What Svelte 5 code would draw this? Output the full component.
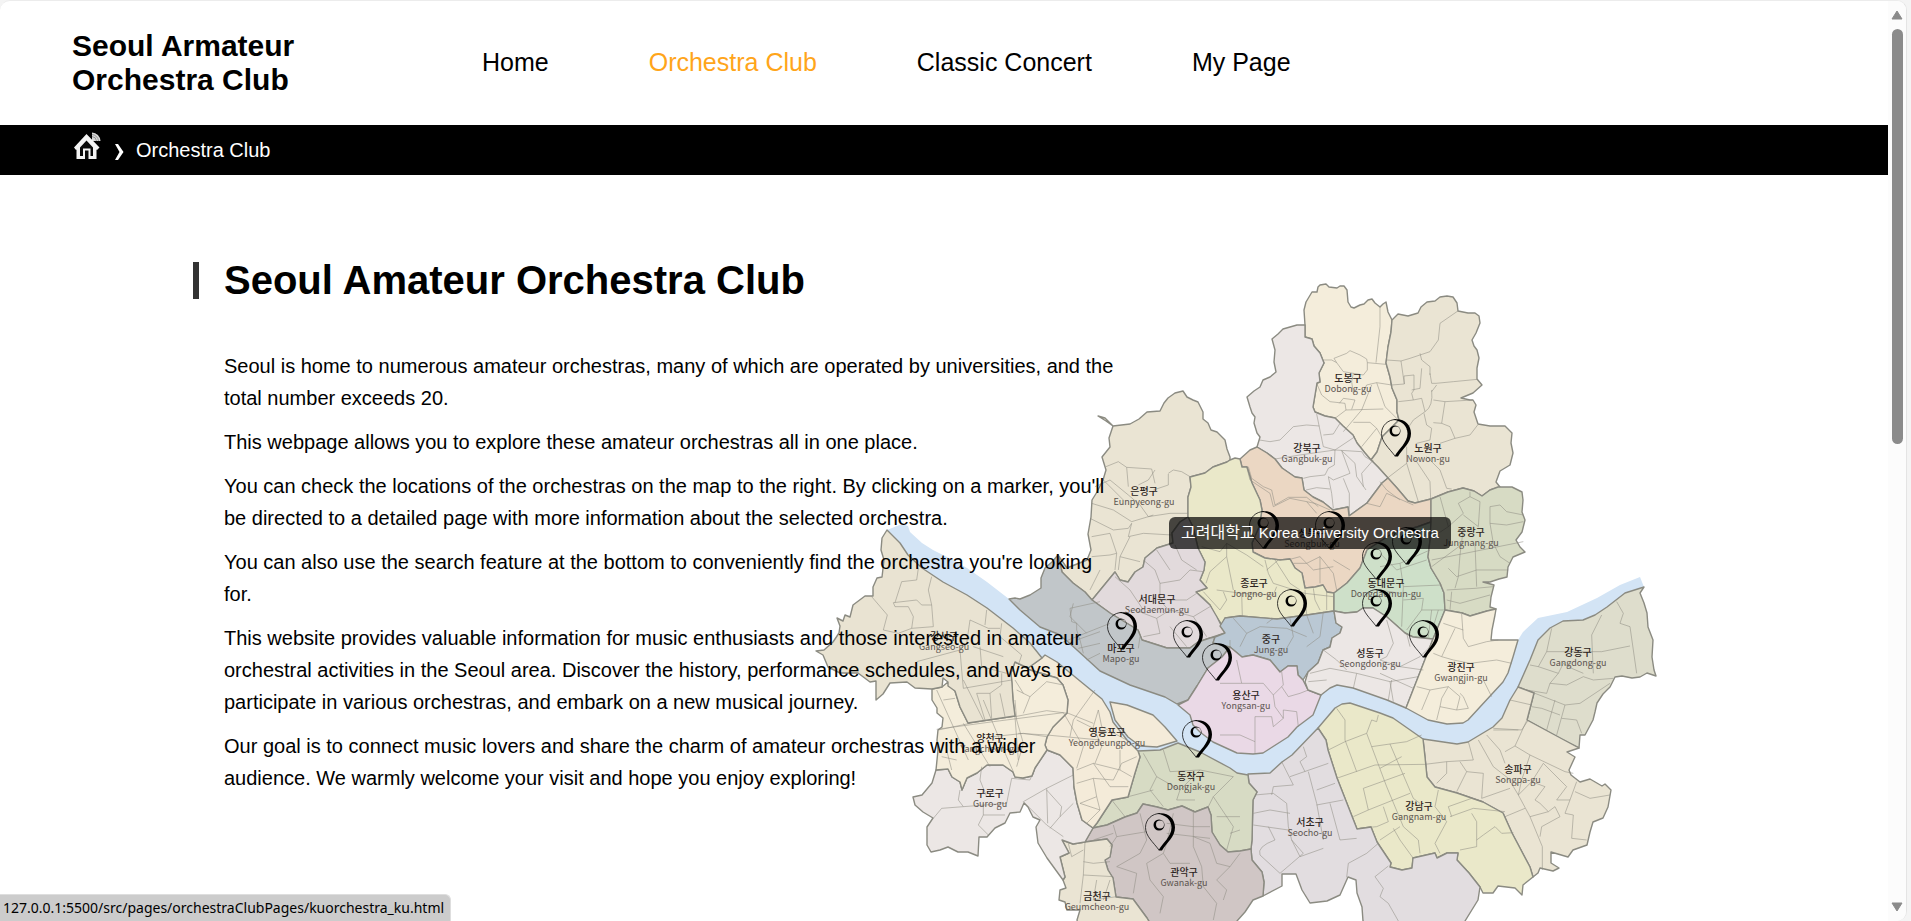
<script>
  const nav = [
    { label: 'Home', active: false },
    { label: 'Orchestra Club', active: true },
    { label: 'Classic Concert', active: false },
    { label: 'My Page', active: false }
  ];

  const paragraphs = [
    'Seoul is home to numerous amateur orchestras, many of which are operated by universities, and the total number exceeds 20.',
    'This webpage allows you to explore these amateur orchestras all in one place.',
    "You can check the locations of the orchestras on the map to the right. By clicking on a marker, you'll be directed to a detailed page with more information about the selected orchestra.",
    "You can also use the search feature at the bottom to conveniently find the orchestra you're looking for.",
    'This website provides valuable information for music enthusiasts and those interested in amateur orchestral activities in the Seoul area. Discover the history, performance schedules, and ways to participate in various orchestras, and embark on a new musical journey.',
    'Our goal is to connect music lovers and share the charm of amateur orchestras with a wider audience. We warmly welcome your visit and hope you enjoy exploring!'
  ];

  // Map units: the drawing starts at (800, 255).
  const originX = 800;
  const originY = 255;

  const river =
    '887,530 902,524 908,526 910,532 922,543 933,550 947,557 967,568 987,582 1009,599 1040,627 1067,638 1120,670 1177,690 1260,740 1321,690 1337,680 1406,700 1447,715 1500,670 1518,640 1523,632 1538,618 1567,612 1597,598 1620,585 1640,577 1644,587 1625,593 1607,607 1595,615 1583,620 1563,621 1550,628 1538,640 1530,660 1518,687 1510,705 1502,722 1493,732 1468,745 1457,748 1423,745 1393,722 1350,708 1335,712 1318,732 1292,759 1270,777 1248,778 1178,750 1138,756 1120,745 1095,705 1042,665 960,600 900,550';

  const districts = [
    { ko: '도봉구', en: 'Dobong-gu', x: 1348, y: 378, fill: '#f4eddb', points: '1305,325 1304,310 1306,302 1309,297 1312,292 1317,292 1318,287 1320,285 1326,284 1329,287 1337,288 1340,286 1344,286 1347,290 1348,302 1351,307 1354,308 1360,305 1364,304 1368,300 1372,299 1375,303 1380,307 1383,304 1386,302 1388,312 1392,320 1391,332 1388,347 1386,363 1390,377 1392,388 1397,400 1397,412 1399,420 1391,428 1382,437 1377,452 1371,460 1365,453 1357,443 1353,435 1343,426 1335,418 1325,416 1315,412 1313,407 1317,383 1320,382 1319,373 1324,363 1320,353 1314,346 1312,339 1305,337' },
    { ko: '노원구', en: 'Nowon-gu', x: 1428, y: 448, fill: '#eae4d3', points: '1392,320 1398,314 1408,316 1418,313 1421,307 1427,302 1435,301 1440,297 1447,296 1453,297 1457,303 1458,311 1468,313 1475,313 1479,316 1480,323 1476,333 1472,340 1474,346 1477,350 1479,358 1477,368 1477,379 1482,385 1473,393 1461,398 1470,400 1473,400 1476,405 1474,412 1478,424 1490,426 1505,426 1512,433 1511,443 1513,453 1510,465 1500,471 1496,482 1500,487 1490,490 1482,496 1474,491 1463,488 1448,492 1431,499 1415,503 1408,501 1397,488 1387,477 1378,467 1371,460 1377,452 1382,437 1391,428 1399,420 1397,412 1397,400 1392,388 1390,377 1386,363 1388,347 1391,332' },
    { ko: '강북구', en: 'Gangbuk-gu', x: 1307, y: 448, fill: '#ece7e5', points: '1305,325 1297,325 1290,327 1283,329 1278,334 1272,339 1275,350 1274,362 1276,372 1270,377 1263,380 1260,387 1254,391 1247,397 1250,407 1252,413 1255,417 1254,423 1257,433 1260,437 1257,447 1267,453 1275,459 1282,468 1295,477 1302,478 1304,490 1313,497 1323,502 1333,510 1348,507 1349,516 1367,503 1382,483 1388,478 1378,467 1371,460 1365,453 1357,443 1353,435 1343,426 1335,418 1325,416 1315,412 1313,407 1317,383 1320,382 1319,373 1324,363 1320,353 1314,346 1312,339 1305,337' },
    { ko: '성북구', en: 'Seongbuk-gu', x: 1312, y: 533, fill: '#ebd7c3', points: '1257,447 1250,450 1240,459 1242,467 1247,467 1252,483 1260,500 1262,510 1259,527 1252,543 1253,552 1265,558 1280,560 1290,559 1295,568 1302,573 1305,588 1315,587 1323,585 1327,592 1334,593 1347,583 1360,568 1367,550 1393,533 1417,527 1431,522 1431,499 1415,503 1408,501 1397,488 1388,478 1382,483 1367,503 1349,516 1348,507 1333,510 1323,502 1313,497 1304,490 1302,478 1295,477 1282,468 1275,459 1267,453' },
    { ko: '은평구', en: 'Eunpyeong-gu', x: 1144, y: 491, fill: '#eae4d3', points: '1098,416 1105,418 1113,426 1130,424 1139,419 1147,412 1160,411 1164,403 1168,398 1175,393 1183,391 1187,397 1193,400 1198,402 1203,412 1203,419 1208,423 1211,430 1217,432 1225,440 1227,449 1230,457 1230,460 1227,462 1213,467 1205,473 1190,477 1191,487 1188,497 1188,517 1180,522 1172,533 1173,543 1157,548 1145,558 1143,567 1135,572 1128,582 1120,580 1115,572 1092,600 1085,592 1073,583 1062,572 1058,555 1067,568 1087,560 1091,550 1088,534 1091,517 1092,500 1097,492 1103,480 1106,470 1102,457 1110,447 1109,438 1113,426 1106,421' },
    { ko: '종로구', en: 'Jongno-gu', x: 1254, y: 583, fill: '#eae8c9', points: '1230,460 1235,458 1240,459 1242,467 1247,467 1252,483 1260,500 1262,510 1259,527 1252,543 1253,552 1265,558 1280,560 1290,559 1295,568 1302,573 1305,588 1315,587 1323,585 1327,592 1334,593 1334,611 1307,615 1277,619 1240,616 1225,618 1222,625 1215,615 1210,605 1203,598 1196,592 1207,588 1200,580 1204,570 1205,562 1198,548 1193,527 1188,517 1188,497 1191,487 1190,477 1205,473 1213,467 1227,462' },
    { ko: '서대문구', en: 'Seodaemun-gu', x: 1157, y: 599, fill: '#e2dadc', points: '1092,600 1115,572 1120,580 1128,582 1135,572 1143,567 1145,558 1157,548 1173,543 1172,533 1180,522 1188,517 1193,527 1198,548 1205,562 1204,570 1200,580 1207,588 1196,592 1210,605 1217,617 1225,633 1210,638 1198,642 1190,648 1167,648 1142,640 1138,630 1110,613' },
    { ko: '마포구', en: 'Mapo-gu', x: 1121, y: 648, fill: '#c1c6c9', points: '1058,555 1052,562 1045,568 1041,578 1041,588 1030,595 1020,599 1015,598 1009,599 1020,610 1040,627 1058,634 1067,641 1077,650 1100,671 1130,685 1165,697 1177,704 1188,700 1197,686 1208,668 1222,657 1230,647 1213,643 1215,637 1210,638 1198,642 1190,648 1167,648 1142,640 1138,630 1110,613 1092,600 1085,592 1073,583 1062,572' },
    { ko: '중구', en: 'Jung-gu', x: 1271, y: 639, fill: '#bac8d4', points: '1225,618 1240,616 1277,619 1307,615 1334,611 1336,623 1342,627 1340,633 1332,638 1330,647 1323,650 1318,663 1308,672 1303,680 1298,675 1297,666 1288,666 1280,672 1270,660 1253,655 1242,657 1230,647 1213,643 1215,637 1225,633 1220,626' },
    { ko: '용산구', en: 'Yongsan-gu', x: 1246, y: 695, fill: '#ead9e6', points: '1230,647 1242,657 1253,655 1270,660 1280,672 1288,666 1297,666 1298,675 1303,680 1308,690 1321,695 1313,715 1297,727 1288,737 1263,753 1253,754 1237,753 1213,742 1200,732 1193,725 1190,715 1178,705 1188,700 1197,686 1208,668 1222,657' },
    { ko: '동대문구', en: 'Dongdaemun-gu', x: 1386, y: 583, fill: '#cee0c9', points: '1334,593 1347,583 1360,568 1367,550 1393,533 1417,527 1431,522 1430,540 1428,557 1431,568 1440,583 1444,593 1445,610 1438,627 1433,639 1413,637 1405,633 1387,617 1373,608 1363,608 1357,612 1345,613 1334,611' },
    { ko: '중랑구', en: 'Jungnang-gu', x: 1471, y: 532, fill: '#d7dbc4', points: '1431,499 1448,492 1463,488 1474,491 1482,496 1490,490 1498,487 1512,487 1518,490 1522,492 1523,500 1522,512 1525,520 1522,532 1516,540 1520,547 1525,552 1513,557 1508,567 1507,577 1499,579 1490,582 1483,582 1494,585 1491,597 1490,607 1496,609 1487,611 1470,616 1462,613 1445,610 1444,593 1440,583 1431,568 1428,557 1430,540 1431,522' },
    { ko: '성동구', en: 'Seongdong-gu', x: 1370, y: 653, fill: '#ece7e5', points: '1334,611 1345,613 1357,612 1363,608 1373,608 1387,617 1405,633 1413,637 1433,639 1406,708 1387,700 1353,688 1337,685 1330,688 1321,695 1308,690 1305,682 1308,672 1318,663 1323,650 1330,647 1332,638 1340,633 1342,627 1336,623' },
    { ko: '광진구', en: 'Gwangjin-gu', x: 1461, y: 667, fill: '#f4eddb', points: '1445,610 1462,613 1470,616 1487,611 1496,609 1495,615 1492,630 1491,640 1518,640 1513,657 1508,673 1503,682 1468,720 1463,723 1447,724 1428,720 1406,708 1433,639 1438,627' },
    { ko: '강동구', en: 'Gangdong-gu', x: 1578, y: 652, fill: '#deddcc', points: '1644,587 1640,593 1644,603 1647,613 1648,627 1653,640 1652,657 1654,670 1656,676 1647,673 1640,677 1632,678 1622,676 1615,677 1610,687 1603,694 1597,703 1595,712 1593,720 1585,735 1580,735 1579,748 1563,740 1527,720 1534,693 1518,687 1530,660 1538,640 1550,628 1563,621 1583,620 1595,615 1607,607 1625,593' },
    { ko: '송파구', en: 'Songpa-gu', x: 1518, y: 769, fill: '#eae4d3', points: '1518,687 1534,693 1527,720 1579,748 1567,752 1575,757 1569,770 1571,775 1580,782 1590,779 1602,786 1605,784 1611,790 1608,807 1603,818 1593,822 1590,832 1587,845 1573,850 1568,857 1551,852 1551,863 1559,868 1553,871 1540,868 1538,873 1533,877 1530,867 1512,833 1503,813 1483,802 1457,793 1435,787 1427,777 1425,757 1423,739 1457,744 1468,742 1493,727 1502,718 1510,700' },
    { ko: '강남구', en: 'Gangnam-gu', x: 1419, y: 806, fill: '#eae8c9', points: '1318,728 1335,708 1342,704 1350,703 1380,713 1393,718 1423,739 1425,757 1427,777 1435,787 1457,793 1483,802 1503,813 1512,833 1530,867 1533,877 1523,885 1522,895 1515,888 1498,886 1493,893 1483,893 1480,887 1469,873 1457,860 1458,853 1447,853 1437,858 1435,853 1413,858 1412,868 1402,870 1390,867 1391,863 1377,842 1371,827 1357,829 1337,778 1328,750 1326,740' },
    { ko: '서초구', en: 'Seocho-gu', x: 1310, y: 822, fill: '#e2dde0', points: '1318,728 1326,740 1328,750 1337,778 1357,829 1371,827 1377,842 1391,863 1390,867 1402,870 1412,868 1413,858 1435,853 1437,858 1447,853 1458,853 1457,860 1469,873 1480,887 1478,900 1465,921 1460,940 1367,940 1363,921 1362,907 1357,893 1356,880 1348,877 1340,895 1327,901 1310,903 1302,890 1296,874 1282,874 1282,886 1263,896 1264,882 1262,872 1252,860 1251,849 1252,840 1253,800 1257,792 1249,783 1248,774 1270,773 1282,762 1292,755' },
    { ko: '동작구', en: 'Dongjak-gu', x: 1191, y: 776, fill: '#d7dbc4', points: '1138,751 1160,750 1178,743 1200,752 1230,768 1237,773 1248,775 1249,783 1257,792 1253,800 1252,840 1251,849 1240,851 1228,852 1220,845 1212,832 1211,815 1208,807 1195,812 1182,806 1168,810 1157,807 1143,804 1137,813 1125,817 1107,825 1093,828 1097,823 1112,800 1128,797 1135,773 1140,757' },
    { ko: '관악구', en: 'Gwanak-gu', x: 1184, y: 872, fill: '#d0c6c5', points: '1093,828 1107,825 1125,817 1137,813 1143,804 1157,807 1168,810 1182,806 1195,812 1208,807 1211,815 1212,832 1220,845 1228,852 1240,851 1251,849 1252,860 1262,872 1264,882 1263,896 1253,900 1245,912 1237,921 1230,940 1160,940 1147,918 1133,899 1116,897 1113,878 1108,870 1105,860 1110,857 1112,845 1107,839 1085,842' },
    { ko: '금천구', en: 'Geumcheon-gu', x: 1097, y: 896, fill: '#eae4d3', points: '1062,840 1073,844 1085,842 1107,839 1112,845 1110,857 1105,860 1108,870 1113,878 1116,897 1133,899 1147,918 1160,940 1082,940 1077,920 1080,910 1067,910 1065,902 1059,900 1060,890 1066,888 1063,880 1065,877 1060,857 1069,853' },
    { ko: '구로구', en: 'Guro-gu', x: 990, y: 793, fill: '#ece7e5', points: '936,770 948,769 952,777 960,782 962,790 967,778 977,773 987,765 1003,765 1013,772 1015,777 1023,778 1032,776 1035,768 1047,750 1060,755 1073,768 1074,787 1077,803 1082,820 1093,828 1085,842 1073,844 1062,840 1069,853 1060,857 1065,877 1063,880 1047,858 1038,843 1036,827 1040,820 1033,817 1028,807 1024,803 1020,812 1010,813 1005,823 995,828 987,837 979,837 978,856 968,852 958,852 948,847 940,850 931,852 927,845 927,827 933,818 923,812 915,805 913,797 922,795 932,783' },
    { ko: '영등포구', en: 'Yeongdeungpo-gu', x: 1107, y: 732, fill: '#f4ebd9', points: '1015,662 1028,668 1042,658 1045,655 1057,662 1080,681 1102,699 1110,712 1113,722 1127,740 1138,751 1140,757 1135,773 1128,797 1112,800 1097,823 1093,828 1082,820 1077,803 1074,787 1073,768 1060,755 1047,750 1045,745 1047,737 1053,727 1067,713 1068,700 1063,685 1057,678 1030,670' },
    { ko: '양천구', en: 'Yangcheon-gu', x: 990, y: 738, fill: '#f4eddb', points: '932,689 942,687 948,682 955,691 960,707 968,723 1015,716 1013,700 1011,673 1015,662 1030,670 1057,678 1063,685 1068,700 1067,713 1053,727 1047,737 1045,745 1047,750 1035,768 1032,776 1023,778 1015,777 1013,772 1003,765 987,765 977,773 967,778 962,790 960,782 952,777 948,769 936,770 938,750 937,740 938,730 942,727 943,718 937,713 937,708 932,700' },
    { ko: '강서구', en: 'Gangseo-gu', x: 944, y: 636, fill: '#e9e3d2', points: '887,530 882,538 881,550 884,560 882,577 877,578 873,587 873,596 865,596 853,605 850,617 845,615 843,621 837,618 840,626 839,633 833,642 824,650 816,651 823,655 828,667 840,673 858,673 870,682 876,681 876,700 883,694 890,683 907,682 915,688 932,689 942,687 943,678 948,682 948,686 955,691 960,707 968,723 1015,716 1013,700 1012,683 1011,673 1015,662 1028,668 1042,658 1030,643 1013,628 987,608 967,595 943,582 922,568 908,555 900,543' }
  ];

  const island = '1110,702 1127,705 1153,715 1165,727 1177,741 1157,747 1140,746 1128,737 1115,720';

  // Neighbourhood borders, drawn sheet by sheet at three times the map scale.
  const sheets = [
    { x: 1200, y: 260, d: 'M540 140L540 200 528 308M557 313L502 308 502 330 490 345 430 335 410 308 402 295 440 280 450 272 480 285 500 297 502 308M410 308L395 300 372 300M460 340L455 365 460 400M350 370L365 405 390 425 435 430 438 450 405 475M438 450L550 447M490 395L500 375 530 368 575 375M530 368L555 440 595 480M515 375L485 450 430 515M460 487L510 487 530 505 485 560M530 505L545 530M418 430L430 415 465 420 455 448M775 152L720 190 715 240 690 275 630 295 603 303 560 300M603 303L613 372 575 375M613 372L612 348 642 345 642 390 635 400 640 420 595 425M660 280L665 300 690 320 690 345M665 325L660 385 635 390M690 340L695 370 708 370 760 365 832 358M695 390Q700 440 675 455M640 420L665 415 675 455 640 480 620 510M700 420L735 425 818 420M735 425L725 490 700 488M672 460L680 495 695 505 690 540 650 550M725 490L750 500 765 535M833 495L810 525 765 535 720 550M620 560L620 610 565 652M620 610L655 725M640 590L690 665 692 717M680 590L720 630 740 685 755 687M695 395L710 375M178 540L210 545 240 540 280 500 320 495 358 498M350 462L370 560 405 570 465 530M370 525L400 522 420 490M225 597L300 585 405 570 485 575 495 590 520 605M405 570L403 615 385 625 375 645 330 650 310 655M385 650L395 700 400 745M385 650L400 660 450 640 425 572M430 655L448 700 448 765M318 690L350 683 390 687M425 572L465 610 470 650 498 690M520 600L485 640 490 680M145 620L155 655 190 680 215 690 225 735 265 712 320 712 355 740M500 730L540 740 560 700 640 735M540 665L560 690 600 720' },
    { x: 1060, y: 370, d: 'M138 290L175 275 200 292 275 297 285 340M325 310L340 300 365 305 390 320M200 292L205 350M285 300L265 330 235 345M325 312L325 345 280 360M105 350L150 330 205 375 240 405 265 440 280 435M95 400L160 420 215 455 265 440 330 430 385 430M130 330L190 390M90 445L160 480 205 475 215 460M215 460L205 500 250 490 335 495M95 500L150 490 170 550 165 600M210 500L180 560 175 600M95 560L150 555 170 550M120 600L100 640 90 660M180 560L240 575M165 620L210 660 250 720M250 570L285 600 300 640 300 690 325 720M300 640L360 630 390 600 430 605M290 540L330 600M345 525L365 570 410 600M300 690L380 690 410 670M225 720L290 745 330 720 400 740 450 710M290 745L300 790 250 800M330 770L380 830M400 740L440 800M425 530L480 545 500 520 560 555 610 590M500 520L500 560 450 605 438 640M470 660L545 670 640 675 650 650M545 670L547 740M500 560L520 660M615 570L625 610 640 640M645 570L690 640 720 660M620 600L655 570M640 640L735 670 820 680M735 660L740 735M760 655L765 690 780 720M800 665L800 720M430 665L480 720 500 690 490 665M560 290L570 330 600 350 630 370 640 410 690 385 740 395 770 430M690 568L720 560 760 600 820 590M700 580L740 580 780 560 780 640M780 560L820 610 830 660M820 570L870 600M740 395L765 400 810 420M520 745L560 790 540 830M560 790L600 770 680 775 740 800M620 760L640 745M740 735L760 790M690 745L700 800 680 835M790 725L780 800 740 830M240 800L235 835M0 820L100 780 150 760M40 700L30 740 80 790' },
    { x: 1380, y: 460, d: 'M180 110L205 200 250 160 235 130 270 110 270 95M270 110L300 125 295 200 250 165M205 200L160 230M330 140L360 135 380 155 430 165M330 140L330 190 380 195 430 185M155 300L230 285 330 265 430 245M250 205L240 285 235 350 225 385M205 325L230 350 290 330 385 330M200 390L285 385 340 380M215 395L210 450M285 250L290 380M330 190L340 250 360 290 390 310M200 420L240 430 330 405M155 320L250 250M0 320L60 310 150 270M60 310L70 380 65 500M70 380L185 375M70 420L130 415 125 450 80 510M125 450L195 450M0 280L50 330 140 300M155 450L145 530M0 390L60 400M175 450L160 500M245 462L250 535 265 560 320 545 355 540M190 490L250 510M225 505L185 590 160 580M185 590L220 600 270 610M310 660L335 710M270 610L350 600 395 610M110 680L150 690 205 680 185 715 180 740 170 780M150 690L125 750M205 680L240 710 230 750 180 740M230 750L265 745 250 710 240 700M20 480L40 550 20 590 0 600 60 620 120 590 150 560M80 520L90 560M0 640L100 685M35 660L25 720M60 620L130 630M500 575L665 575 750 558M710 425L730 460 720 490 750 500 770 640M665 465L635 525 640 640M515 505L500 575 475 620M450 615L475 620 535 640 550 610 575 625 610 640M440 690L500 700 510 670 560 675 610 650 640 660 700 655M465 700L555 735 600 730 690 670M555 735L530 825M525 720L500 810M455 740L485 745 540 765M545 775L590 780 605 820M535 640L510 670M390 720L455 735M340 805L425 810M425 810L445 780' },
    { x: 1220, y: 640, d: 'M775 300L820 380 865 415 895 465 930 530 967 620 967 690M820 270L895 270M800 285L840 330 855 370M855 335L885 318 920 242M885 318L930 345 1035 395 1060 400M930 345L905 420 895 465M785 475L870 445M895 465L935 425 970 370M935 425L975 440 945 480 960 490M960 490L985 515 930 530M855 530L915 505M1070 425L1050 480 1035 520 1060 525 1055 595 1100 600M1065 455L1110 475 1170 465M985 515L1005 500 1020 530 965 560 960 590M745 305L760 360 680 365 615 373M680 365L680 400 650 430M720 365L740 395 790 400 785 475M740 395L710 455M1040 440L1010 480 1050 480M970 370L1040 440M350 205L375 240 375 300 410 395M325 330L375 305 440 280 455 240 470 245 475 225M440 280L500 440 550 560 595 600 600 640M455 320L510 312 560 305 605 285M510 312L580 475 600 490M350 415L465 375 615 373M545 350L480 385M430 445L555 400M430 445L445 510 400 530M445 510L570 460M490 500L505 545 470 560 420 565M520 565L540 600 580 655M480 600L540 560M685 500L755 475 790 485M690 530L760 505 855 515M655 450L645 500 680 545 645 610 660 640M755 520L770 545 770 620 720 630M770 600L790 585 825 560 845 580 880 578M685 500L695 530M250 320L260 350 240 365 255 395M185 365L220 435 160 440 155 465M210 410L325 370M265 395L290 490 310 600M290 450L345 430M290 495L370 480M330 490L360 600 410 595M105 465L160 460 200 490 205 560 215 600M100 520L150 510 210 520M100 555L205 570M145 560L165 600Q110 620 120 645L180 700M215 600L250 640 215 670 180 700M380 712L385 670 440 640 475 610M505 678L465 710 490 745 480 770 505 790 535 843M215 600L240 650 310 625M105 340L105 230 155 230 160 260 190 235M0 285L60 285 105 305M50 60L65 130 130 130 160 165 190 135 185 95M160 165L165 200 190 235 190 210 230 215 235 260M0 130L65 130M185 140L205 170 240 160 265 150M30 0L30 60M270 100L330 85 410 100 510 125 595 110M410 100L400 145M510 125L520 185M265 125L320 120M310 30L350 60 380 90' },
    { x: 800, y: 500, d: 'M215 290L262 345 250 390 295 400 335 385 340 350 325 320 285 320 280 308 350 300 365 315 395 315 400 380 335 385M285 308L305 245 350 240 355 205M395 230L385 270 395 315M510 360L500 430 480 450 350 485M510 360L565 385 600 385M560 330L555 375M605 370L600 410 665 465 655 495M480 450L485 510 490 565M540 440L545 500 620 520M490 565L635 540M520 440L610 470M530 580L570 580 605 555 605 520M570 580L575 655M600 580L615 650M530 580L555 660M490 540L550 660M410 570L505 780M430 600L465 595M415 690L510 670M645 650L655 780M650 570L690 590 740 545M645 540L670 580M645 650L740 632 805 640 880 670M690 590L670 640M740 545L790 555M810 710L820 660 885 570M655 700L740 705 900 720M900 305L810 325 815 365 830 370 830 390 840 420 850 460M830 420L900 395M835 445L900 430M860 480L900 460' },
    { x: 880, y: 700, d: 'M250 70L330 200M310 0L380 170 400 215M170 88L340 65 550 38M340 110L430 100 500 110M185 170L230 180M405 0L410 60 430 130 410 200M200 150L215 210M240 270L235 300 250 320M160 355L185 325 250 320 380 310 395 235M305 200L300 240 320 290M310 310L310 345 375 345M310 345L295 375 325 405M395 235L450 240 465 205M430 305L500 265 580 225M500 265L503 370M430 305L500 375 550 410M500 270L545 320 540 350 580 310M540 350L510 385M590 60L640 85M655 30L640 80 665 140 645 190M655 30L665 80 740 120M590 210L640 190 720 210M590 250L640 235 700 240M600 310L650 290 640 235M650 290L660 330M620 370L660 330 600 310M700 240L725 190 770 170M640 190L690 260 745 260M550 38L610 140 590 205M720 150L720 210 755 230M790 160L830 230 810 270 850 320M830 230L900 270 890 300 945 300M850 150L870 215M900 270L960 210 1060 230M1000 290L1060 230M1000 290L985 320M1000 290L1060 380 1040 450M870 215L960 210M745 290L820 270M695 300L735 350M1010 350L1080 350M1050 400L1080 390M615 425L610 525 600 610M610 485L640 490 690 485M610 525L700 530M565 430L575 470 610 450M650 540L640 600 710 590M690 540L670 600M700 375L710 410 800 395M710 410L690 440M780 340L800 420 780 460 710 500M880 340L860 430 850 460M860 370L940 380 990 380M860 400L990 415M940 330L940 440 965 500 970 560 1010 610 1000 660M850 460L800 490 810 540 850 590 840 640M850 460L870 490 930 490M710 500L770 520 760 580M940 410L990 430 1010 490 1050 500 1080 460M1050 500L1010 540 1040 570 1030 600M640 420L700 400' }
  ];

  const pins = [
    { x: 1381, y: 419 }, { x: 1249, y: 511 }, { x: 1315, y: 511 }, { x: 1362, y: 542 },
    { x: 1392, y: 527 }, { x: 1277, y: 589 }, { x: 1362, y: 589 }, { x: 1409, y: 620 },
    { x: 1173, y: 620 }, { x: 1202, y: 643 }, { x: 1107, y: 612 }, { x: 1182, y: 720 },
    { x: 1145, y: 813 }
  ];
</script>

<div class="window">
  <div class="page">
    <header class="top">
      <a class="logo" href="#home">Seoul Armateur<br />Orchestra Club</a>
      <nav>
        {#each nav as item}
          <a class:active={item.active} href="#nav">{item.label}</a>
        {/each}
      </nav>
    </header>

    <div class="crumbs">
      <a href="#home" aria-label="Home">
        <svg class="home" viewBox="0 0 28 28" width="28" height="28">
          <path d="M19 0.500 A9 9 0 0 1 27.500 9 L19 9Z" fill="#d9d9d9" />
          <path d="M19 4.500A5 5 0 0 1 23.500 9M19 2.500A7 7 0 0 1 25.500 9" fill="none" stroke="#777" stroke-width=".7" />
          <path d="M1 15.500 L13.500 2 L26.500 15.500 L24 18 L23.500 17.500 V27 H3.500 V17.500 L3 18Z" fill="#f4f4f4" />
          <path d="M7 15.500 L13.500 8.500 L20 15.500 V24 H17.500 V16.500 H10 V24 H7Z" fill="#0a0a0a" />
          <path d="M12 18.500h3.500v8.500H12z" fill="#0a0a0a" />
        </svg>
      </a>
      <svg class="chevron" viewBox="0 0 9 16" width="9" height="16">
        <path d="M0 0H3L8.500 8L3 16H0L4.500 8Z" fill="#fff" />
      </svg>
      <span>Orchestra Club</span>
    </div>

    <main>
      <section class="intro">
        <div class="title"><span class="mark"></span><h1>Seoul Amateur Orchestra Club</h1></div>
        <div class="copy">
          {#each paragraphs as text}
            <p>{text}</p>
          {/each}
        </div>
      </section>

      <figure>
        <svg class="map" viewBox="800 255 870 685" role="img" aria-label="Seoul">
          <polygon points={river} fill="#d3e4f5" />
          {#each districts as d}
            <polygon class="district" points={d.points} fill={d.fill} />
          {/each}
          <polygon class="district" points={island} fill="#f4ebd9" />
          {#each sheets as s}
            <path class="inner" transform="translate({s.x} {s.y}) scale(.33333)" d={s.d} />
          {/each}
          {#each districts as d}
            <text class="ko" x={d.x} y={d.y + 4}>{d.ko}</text>
            <text class="en" x={d.x} y={d.y + 14}>{d.en}</text>
          {/each}
        </svg>
        {#each pins as p}
          <a class="pin" href="#orchestra" aria-label="Orchestra" style="left: {p.x - originX}px; top: {p.y - originY}px">
            <svg viewBox="0 0 30 38" width="30" height="38">
              <path d="M15 .5C7 .5 .5 6.500 .5 14.500C.5 23 8 29 14 37" fill="none" stroke="#111" stroke-width=".8" />
              <path d="M12 .8C22 -1.500 30 5 30 14.500C30 24 22 29 17 37.500H13.500C18 29.500 26.500 23.500 26.500 14.500C26.500 7 20.500 1.500 12 .8Z" />
              <path fill-rule="evenodd" d="M14 6.500A5.500 5.500 0 1 0 14 17.500A5.500 5.500 0 1 0 14 6.500ZM15 7.500A4 4 0 1 1 15 15.500A4 4 0 1 1 15 7.500Z" />
            </svg>
          </a>
        {/each}
        <div class="tooltip" role="tooltip"><span lang="ko">고려대학교</span> Korea University Orchestra</div>
      </figure>
    </main>
  </div>

  <div class="scrollbar">
    <svg viewBox="0 0 12 10" width="12" height="10"><path d="M6 1L11 9H1Z" fill="#8b8b8b" stroke="#8b8b8b" stroke-linejoin="round" /></svg>
    <span class="thumb"></span>
    <svg class="down" viewBox="0 0 12 10" width="12" height="10"><path d="M6 9L11 1H1Z" fill="#8b8b8b" stroke="#8b8b8b" stroke-linejoin="round" /></svg>
  </div>

  <div class="status">127.0.0.1:5500/src/pages/orchestraClubPages/kuorchestra_ku.html</div>
</div>

<style>
  :global(body) {
    margin: 0;
    background: #f4f4f4;
    font-family: 'Liberation Sans', 'Noto Sans CJK KR', sans-serif;
    color: #000;
  }
  a {
    color: inherit;
    text-decoration: none;
  }
  .window {
    position: relative;
    display: flex;
    height: 100vh;
    margin-right: 4px;
    box-sizing: border-box;
    overflow: hidden;
    background: #fff;
    border-top: 1px solid #ececec;
    border-right: 1px solid #e4e4e4;
    border-radius: 10px 10px 10px 0;
  }
  .page {
    flex: 1;
    min-width: 0;
    overflow: hidden;
  }
  .top {
    display: flex;
    align-items: center;
    height: 124px;
    padding-left: 72px;
  }
  .logo {
    width: 410px;
    font-size: 30px;
    line-height: 34px;
    font-weight: 700;
  }
  nav {
    display: flex;
    gap: 100px;
    padding-bottom: 2px;
    font-size: 25px;
  }
  .active {
    color: #ffa51a;
  }
  .crumbs {
    display: flex;
    align-items: center;
    height: 50px;
    padding-left: 73px;
    background: #000;
    color: #fff;
    font-size: 20px;
  }
  .home {
    display: block;
    margin-bottom: 8px;
  }
  .chevron {
    margin: 4px 12px 0 14px;
  }
  main {
    display: grid;
    padding: 80px 218px 0 193px;
  }
  .intro,
  figure {
    grid-area: 1 / 1;
  }
  .intro {
    position: relative;
    z-index: 1;
    justify-self: start;
    pointer-events: none;
  }
  .title {
    display: flex;
    align-items: center;
    gap: 25px;
    height: 50px;
  }
  .mark {
    width: 6px;
    height: 37px;
    background: #333;
  }
  h1 {
    margin: 0;
    font-size: 40px;
  }
  .copy {
    width: 895px;
    margin: 45px 0 0 31px;
    font-size: 20px;
    line-height: 32px;
  }
  p {
    margin: 0 0 12px;
  }
  figure {
    position: relative;
    z-index: 0;
    justify-self: end;
    width: 870px;
    margin: 0;
  }
  .map {
    display: block;
    width: 100%;
  }
  .district {
    stroke: #8b8b82;
    stroke-width: 1.4;
    stroke-linejoin: round;
  }
  .inner {
    fill: none;
    stroke: #8e8c82;
    stroke-width: 2;
    stroke-opacity: 0.8;
    stroke-linejoin: round;
  }
  .ko,
  .en {
    font-family: 'Noto Sans CJK KR', sans-serif;
    text-anchor: middle;
  }
  .ko {
    font-size: 10px;
    font-weight: 500;
    fill: #2b2320;
  }
  .en {
    font-size: 9px;
    fill: #5c544f;
  }
  .pin {
    position: absolute;
  }
  .pin svg {
    display: block;
  }
  .tooltip {
    position: absolute;
    left: 369px;
    top: 262px;
    padding: 4px 12px;
    border-radius: 6px;
    background: rgba(0, 0, 0, 0.7);
    color: #fff;
    font-size: 15px;
    line-height: 24px;
    white-space: nowrap;
  }
  .tooltip span {
    font-size: 16px;
  }
  .scrollbar {
    display: flex;
    flex-direction: column;
    align-items: center;
    gap: 9px;
    width: 18px;
    padding: 9px 0;
    background: #fcfcfc;
  }
  .thumb {
    width: 11px;
    height: 46%;
    border-radius: 6px;
    background: #8b8b8b;
  }
  .down {
    margin-top: auto;
  }
  .status {
    position: absolute;
    left: 0;
    bottom: 0;
    z-index: 2;
    padding: 0 6px 0 3px;
    border-top: 1px solid #dedede;
    border-right: 1px solid #dedede;
    border-radius: 0 6px 0 0;
    background: #ccc;
    font-family: 'Noto Sans', sans-serif;
    font-size: 14px;
    line-height: 26px;
  }
</style>
